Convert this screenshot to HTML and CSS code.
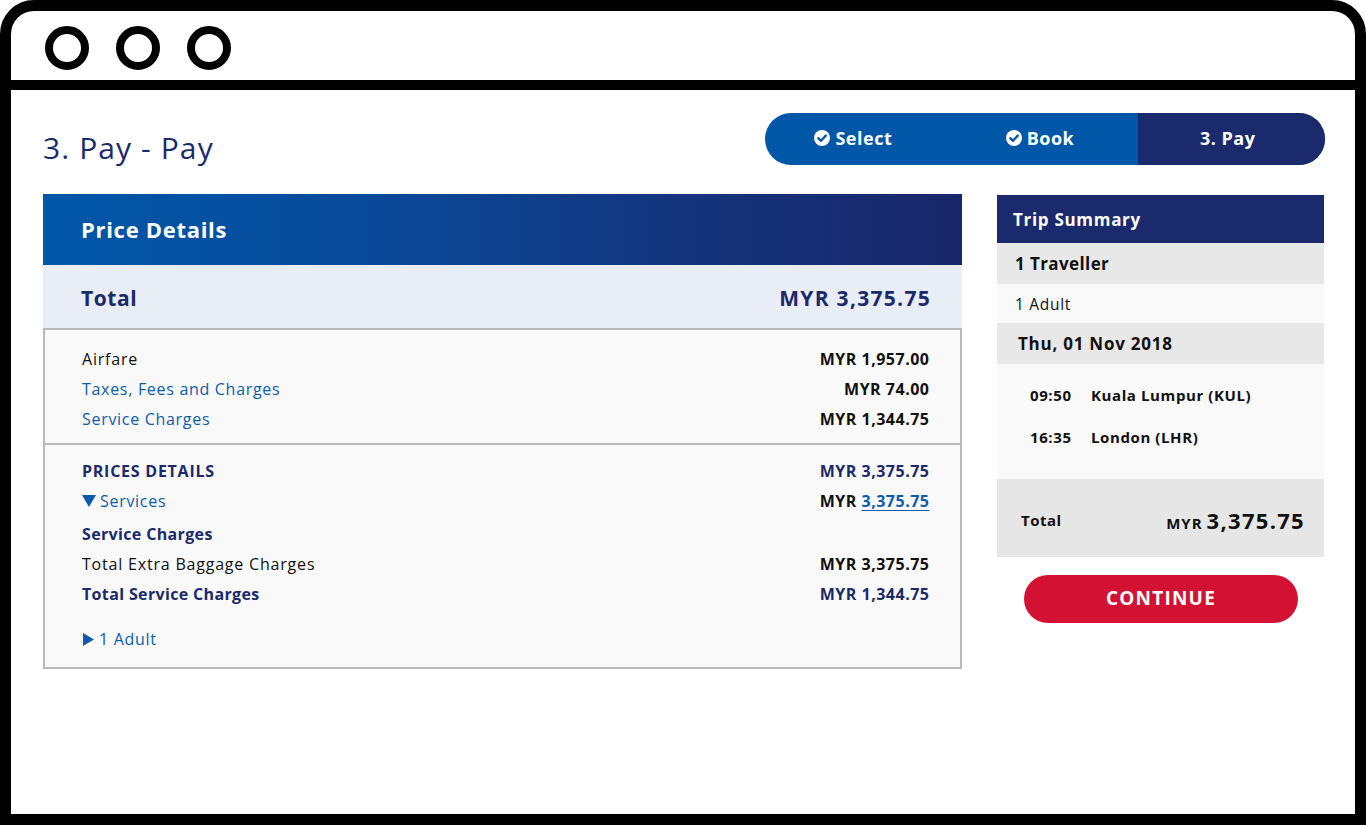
FILE: index.html
```html
<!DOCTYPE html>
<html lang="en">
<head>
<meta charset="utf-8">
<title>3. Pay - Pay</title>
<link rel="stylesheet" href="styles.css">
</head>
<body>
<div class="frame">
  <div class="titlebar">
    <span class="dot"></span><span class="dot"></span><span class="dot"></span>
  </div>
  <div class="content">
    <div class="top-row">
      <h1 class="page-title">3. Pay - Pay</h1>
      <div class="stepper">
        <div class="step done">
          <svg class="check" viewBox="0 0 16 16" width="16" height="16"><circle cx="8" cy="8" r="8" fill="#fff"/><path d="M4.3 8.2 L7 10.8 L11.8 5.6" fill="none" stroke="#0057a8" stroke-width="2.3" stroke-linecap="round" stroke-linejoin="round"/></svg>
          <span>Select</span>
        </div>
        <div class="step done">
          <svg class="check" viewBox="0 0 16 16" width="16" height="16"><circle cx="8" cy="8" r="8" fill="#fff"/><path d="M4.3 8.2 L7 10.8 L11.8 5.6" fill="none" stroke="#0057a8" stroke-width="2.3" stroke-linecap="round" stroke-linejoin="round"/></svg>
          <span>Book</span>
        </div>
        <div class="step current"><span>3. Pay</span></div>
      </div>
    </div>

    <div class="main-row">
      <section class="price-panel">
        <div class="price-head">Price Details</div>
        <div class="total-row"><span class="tr-label">Total</span><span class="tr-amt">MYR 3,375.75</span></div>
        <div class="price-box">
          <div class="sec sec-one">
            <div class="row"><span class="plain">Airfare</span><span class="amt">MYR 1,957.00</span></div>
            <div class="row"><span class="link">Taxes, Fees and Charges</span><span class="amt">MYR 74.00</span></div>
            <div class="row"><span class="link">Service Charges</span><span class="amt">MYR 1,344.75</span></div>
          </div>
          <div class="sec sec-two">
            <div class="row"><span class="navy-b caps">PRICES DETAILS</span><span class="amt navy">MYR 3,375.75</span></div>
            <div class="row"><span class="link"><svg class="tri" viewBox="0 0 14 12" width="14" height="12"><path d="M0 0 H14 L7 12 Z" fill="#0d5cab"/></svg>Services</span><span class="amt">MYR <span class="ulink">3,375.75</span></span></div>
            <div class="row gap-s"><span class="navy-b">Service Charges</span></div>
            <div class="row"><span class="plain">Total Extra Baggage Charges</span><span class="amt">MYR 3,375.75</span></div>
            <div class="row"><span class="navy-b">Total Service Charges</span><span class="amt navy">MYR 1,344.75</span></div>
            <div class="row gap-l"><span class="link"><svg class="tri-r" viewBox="0 0 11 13" width="11" height="13"><path d="M0 0 L11 6.5 L0 13 Z" fill="#0d5cab"/></svg>1 Adult</span></div>
          </div>
        </div>
      </section>

      <aside class="side">
        <div class="trip">
          <div class="trip-head">Trip Summary</div>
          <div class="trip-row grey bold">1 Traveller</div>
          <div class="trip-row light">1 Adult</div>
          <div class="trip-row grey bold date">Thu, 01 Nov 2018</div>
          <div class="flights">
            <div class="flight"><span class="time">09:50</span><span>Kuala Lumpur (KUL)</span></div>
            <div class="flight"><span class="time">16:35</span><span>London (LHR)</span></div>
          </div>
          <div class="trip-total">
            <span class="tt-label">Total</span>
            <span class="tt-amt"><span class="cur">MYR</span> <span class="big">3,375.75</span></span>
          </div>
        </div>
        <button class="continue">CONTINUE</button>
      </aside>
    </div>
  </div>
</div>
</body>
</html>
```

FILE: styles.css
```css
* { box-sizing: border-box; }
html, body { margin: 0; padding: 0; background: #fff; }
body { font-family: "Open Sans", "Liberation Sans", sans-serif; color: #111; letter-spacing: 0.6px; }

.frame {
  width: 1366px;
  height: 825px;
  border: 11px solid #000;
  border-radius: 34px 34px 0 0;
  display: flex;
  flex-direction: column;
  overflow: hidden;
}

.titlebar {
  height: 79px;
  flex: none;
  border-bottom: 10px solid #000;
  display: flex;
  align-items: center;
  gap: 27px;
  padding-left: 34px;
  padding-top: 5px;
}
.dot {
  width: 44px;
  height: 44px;
  border: 8px solid #000;
  border-radius: 50%;
}

.content {
  flex: 1;
  padding: 23px 30px 0 32px;
}

.top-row {
  display: flex;
  justify-content: space-between;
  align-items: flex-start;
}
.page-title {
  margin: 17px 0 0 0;
  font-size: 30px;
  line-height: 36px;
  font-weight: 400;
  color: #1b2a6b;
  letter-spacing: 1.1px;
}

.stepper {
  width: 560px;
  height: 52px;
  border-radius: 26px;
  overflow: hidden;
  display: flex;
  background: #0057a8;
}
.step {
  flex: none;
  width: 33.3333%;
  display: flex;
  align-items: center;
  justify-content: center;
  gap: 5px;
  color: #fff;
  font-weight: 700;
  font-size: 18px;
  letter-spacing: 0.5px;
  padding-bottom: 2px;
}
.step.done { padding-right: 10px; }
.step.current { background: #1a2a6c; padding-right: 8px; }
.check { display: block; }

.main-row {
  display: flex;
  gap: 35px;
  margin-top: 28px;
  align-items: flex-start;
}

.price-panel { width: 919px; }
.price-head {
  height: 71px;
  background: linear-gradient(90deg, #0057a8 0%, #0a4a9a 35%, #14347c 70%, #1a2669 100%);
  color: #fff;
  font-weight: 700;
  font-size: 22px;
  letter-spacing: 0.7px;
  display: flex;
  align-items: center;
  padding-left: 38px;
  padding-bottom: 1px;
}
.total-row {
  height: 63px;
  background: #e9edf6;
  display: flex;
  justify-content: space-between;
  align-items: center;
  padding: 2px 32px 0 38px;
  color: #1b2a6b;
  font-weight: 700;
  font-size: 21px;
}
.tr-label { letter-spacing: 0.6px; }
.tr-amt { letter-spacing: 1.3px; margin-right: -1px; }

.price-box {
  border: 2px solid #b9b9b9;
  background: #f9f9f9;
}
.sec { padding: 0 31px 0 37px; }
.sec-one { padding-top: 14px; padding-bottom: 9px; border-bottom: 2px solid #b9b9b9; }
.sec-two { padding-top: 11px; padding-bottom: 13px; }
.row {
  height: 30px;
  display: flex;
  justify-content: space-between;
  align-items: center;
  font-size: 16px;
}
.row.gap-s { margin-top: 3px; }
.row.gap-l { margin-top: 15px; }
.plain { color: #111; letter-spacing: 0.8px; }
.link { color: #0d5cab; display: flex; align-items: center; letter-spacing: 0.7px; }
.navy-b { color: #1b2a6b; font-weight: 700; letter-spacing: 0.35px; }
.caps { letter-spacing: 0.75px; }
.amt { font-weight: 700; color: #111; letter-spacing: 0.5px; margin-right: -0.5px; }
.amt.navy { color: #1b2a6b; }
.ulink { color: #0d5cab; text-decoration: underline; text-underline-offset: 3px; }
.tri { margin-right: 4px; }
.tri-r { margin: 0 5px 0 1px; }

.side { width: 327px; margin-top: 1px; }
.trip { background: #f9f9f9; }
.trip-head {
  height: 48px;
  background: #1a2a6c;
  color: #fff;
  font-weight: 700;
  font-size: 17px;
  letter-spacing: 0.7px;
  display: flex;
  align-items: center;
  padding-left: 16px;
}
.trip-row {
  display: flex;
  align-items: center;
  padding-left: 18px;
  font-size: 15px;
  color: #111;
  letter-spacing: 0.7px;
}
.trip-row.grey { background: #e8e8e8; height: 41px; }
.trip-row.light { background: #f9f9f9; height: 39px; font-size: 15.5px; }
.trip-row.bold { font-weight: 700; font-size: 17px; letter-spacing: 0.4px; }
.trip-row.date { padding-left: 21px; letter-spacing: 0.75px; }

.flights {
  height: 115px;
  padding: 16px 0 0 33px;
}
.flight {
  height: 30px;
  display: flex;
  align-items: center;
  font-size: 15px;
  font-weight: 700;
  color: #111;
  margin-bottom: 12px;
  letter-spacing: 0.6px;
}
.time { width: 61px; }

.trip-total {
  height: 78px;
  background: #e6e6e6;
  display: flex;
  justify-content: space-between;
  align-items: center;
  padding: 4px 19px 0 24px;
  color: #111;
}
.tt-label { font-weight: 700; font-size: 15px; letter-spacing: 0.5px; }
.tt-amt { font-weight: 700; display: flex; align-items: baseline; gap: 4px; }
.cur { font-size: 15px; letter-spacing: 1px; }
.big { font-size: 22px; letter-spacing: 1.3px; }

.continue {
  display: block;
  margin: 18px 0 0 27px;
  width: 274px;
  height: 48px;
  border: none;
  border-radius: 24px;
  background: #d31133;
  color: #fff;
  font-family: "Open Sans", "Liberation Sans", sans-serif;
  font-weight: 700;
  font-size: 19px;
  letter-spacing: 1.2px;
  padding: 0 0 2px 0;
}
```
